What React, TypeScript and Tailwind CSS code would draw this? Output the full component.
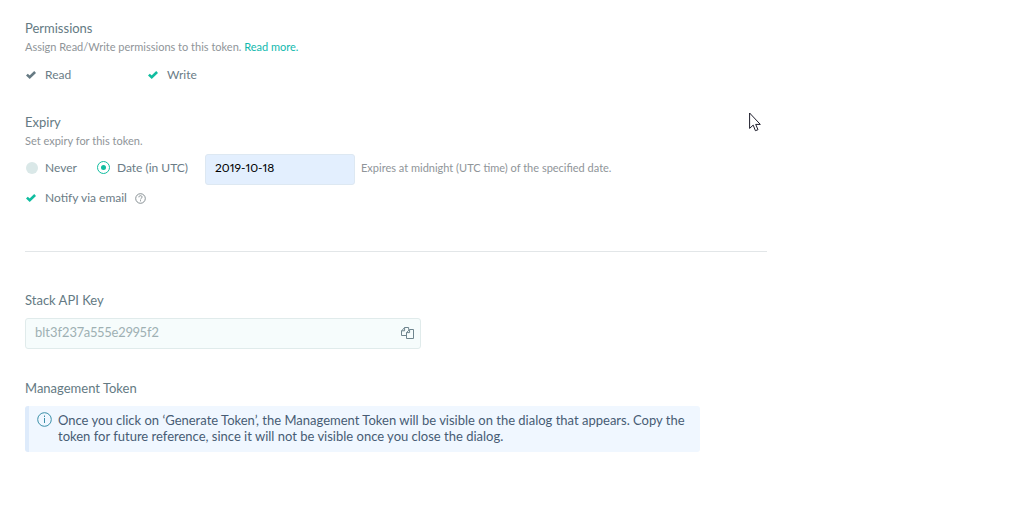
import { useState } from 'react';
import type { ReactNode } from 'react';

// Section heading with an optional line of help text
const SectionTitle = ({ title, children }: { title: string; children?: ReactNode }) => (
  <>
    <h2 className="text-[13px] leading-5 text-[#647a83]">{title}</h2>
    {children && <p className="text-[11px] leading-[18px] text-[#8f9599]">{children}</p>}
  </>
);

function CheckOption({
  label,
  color,
  defaultChecked,
  disabled,
}: {
  label: string;
  color: string;
  defaultChecked?: boolean;
  disabled?: boolean;
}) {
  return (
    <label className="flex items-center gap-2 text-xs leading-5 text-[#6b7c86]">
      <span className="grid size-3 place-items-center">
        <input
          type="checkbox"
          defaultChecked={defaultChecked}
          disabled={disabled}
          className="peer col-start-1 row-start-1 size-3 appearance-none"
        />
        <svg
          viewBox="0 0 10 8"
          className={`pointer-events-none invisible col-start-1 row-start-1 h-2 w-2.5 peer-checked:visible ${color}`}
          fill="none"
          stroke="currentColor"
          strokeWidth="2.6"
        >
          <path d="M.9 3.6 3.7 6.2 9.1 1" />
        </svg>
      </span>
      {label}
    </label>
  );
}

function RadioOption({
  label,
  checked,
  onChange,
}: {
  label: string;
  checked: boolean;
  onChange: () => void;
}) {
  return (
    <label className="flex items-center gap-[7px] text-xs leading-5 text-[#6b7c86]">
      <span className="grid size-[13px] place-items-center">
        <input
          type="radio"
          name="expiry"
          checked={checked}
          onChange={onChange}
          className="peer col-start-1 row-start-1 size-3 appearance-none rounded-full bg-[#dae8e8] checked:size-[13px] checked:border checked:border-[#10bda0] checked:bg-white"
        />
        <span className="pointer-events-none invisible col-start-1 row-start-1 size-[5px] rounded-full bg-[#10bda0] peer-checked:visible" />
      </span>
      {label}
    </label>
  );
}

const HelpIcon = () => (
  <svg viewBox="0 0 11 11" className="size-[11px] text-[#7b8489]" fill="none" stroke="currentColor">
    <circle cx="5.5" cy="5.5" r="4.8" strokeWidth=".9" />
    <path d="M3.9 4.3c0-1.1.7-1.6 1.6-1.6s1.6.6 1.6 1.4c0 1-1.5 1.1-1.5 2.3" strokeWidth=".9" />
    <path d="M5.5 7.3v1" strokeWidth="1" />
  </svg>
);

const CopyIcon = () => (
  <svg viewBox="0 0 13 12" className="h-3 w-[13px]" fill="none" stroke="currentColor">
    <path d="M5.5 8.5h-5V4L3.6.5h4v2.3M3.6.5v3.3H.5" />
    <path d="M8.6 2.5h3.9v9h-7V5.6zM8.6 2.5v3.1H5.5" />
  </svg>
);

const InfoIcon = () => (
  <svg viewBox="0 0 15 15" className="size-[15px] shrink-0 text-[#3a8fa8]" fill="none" stroke="currentColor">
    <circle cx="7.5" cy="7.5" r="6.8" />
    <path d="M7.5 6v5M7.5 3.5V5" />
  </svg>
);

const Cursor = () => (
  <svg viewBox="0 0 12 20" className="pointer-events-none absolute top-[112px] left-[749px] h-5 w-3">
    <path
      d="M.6 1v15.4l3.6-3.3 2.2 5.6 2.6-1-2.3-5.3h4.6z"
      fill="#fff"
      stroke="#1d1d2b"
    />
  </svg>
);

export default function App() {
  const [expiry, setExpiry] = useState<'never' | 'date'>('date');
  const [date, setDate] = useState('2019-10-18');

  return (
    <main className="relative min-h-screen bg-white px-[25px] pt-[18px] pb-12 font-['Lato',sans-serif]">
      <div className="max-w-[742px]">
        {/* Permissions */}
        <section>
          <SectionTitle title="Permissions">
            Assign Read/Write permissions to this token.{' '}
            <a href="#permissions" className="text-[#10b9ae]">
              Read more.
            </a>
          </SectionTitle>
          <div className="mt-[9px] grid grid-cols-[122px_auto] justify-start">
            <CheckOption label="Read" color="text-[#667a83]" defaultChecked disabled />
            <CheckOption label="Write" color="text-[#10bda0]" defaultChecked />
          </div>
        </section>

        {/* Expiry */}
        <section className="mt-[27px]">
          <SectionTitle title="Expiry">Set expiry for this token.</SectionTitle>
          <div className="mt-1 flex items-center">
            <div className="flex w-[180px] gap-5 pb-1">
              <RadioOption label="Never" checked={expiry === 'never'} onChange={() => setExpiry('never')} />
              <RadioOption label="Date (in UTC)" checked={expiry === 'date'} onChange={() => setExpiry('date')} />
            </div>
            <input
              type="text"
              aria-label="Expiry date"
              value={date}
              onChange={(e) => setDate(e.target.value)}
              className="h-[31px] w-[150px] rounded-[3px] border border-[#dde8f2] bg-[#e3effe] px-[9px] pb-1 text-xs text-black proportional-nums"
            />
            <p className="ml-1.5 pb-0.5 text-[11px] text-[#8f9599]">
              Expires at midnight (UTC time) of the specified date.
            </p>
          </div>
          <div className="mt-[3px] flex items-center gap-2">
            <CheckOption label="Notify via email" color="text-[#10bda0]" defaultChecked />
            <button type="button" aria-label="Help">
              <HelpIcon />
            </button>
          </div>
        </section>

        <hr className="mt-[43px] border-[#e2e6e8]" />

        {/* Stack API Key */}
        <section className="mt-[38px]">
          <SectionTitle title="Stack API Key" />
          <div className="mt-2 flex h-[31px] max-w-[396px] items-center rounded-[3px] border border-[#e0ebeb] bg-[#f6fcfc] pr-1.5 pb-0.5 pl-[9px]">
            <input
              type="text"
              aria-label="Stack API Key"
              readOnly
              defaultValue="blt3f237a555e2995f2"
              className="min-w-0 flex-1 bg-transparent text-[13px] text-[#9eb0b3] proportional-nums"
            />
            <button type="button" aria-label="Copy" className="text-[#6f858e]">
              <CopyIcon />
            </button>
          </div>
        </section>

        {/* Management Token */}
        <section className="mt-[29px]">
          <SectionTitle title="Management Token" />
          <div className="mt-2 flex max-w-[675px] gap-1.5 rounded-[3px] border-l-4 border-[#deebfb] bg-[#f0f7ff] pt-1.5 pr-2 pb-2 pl-2">
            <InfoIcon />
            <p className="text-[13px] leading-4 text-[#475c74]">
              Once you click on ‘Generate Token’, the Management Token will be visible on the dialog that appears. Copy the
              token for future reference, since it will not be visible once you close the dialog.
            </p>
          </div>
        </section>
      </div>

      <Cursor />
    </main>
  );
}
